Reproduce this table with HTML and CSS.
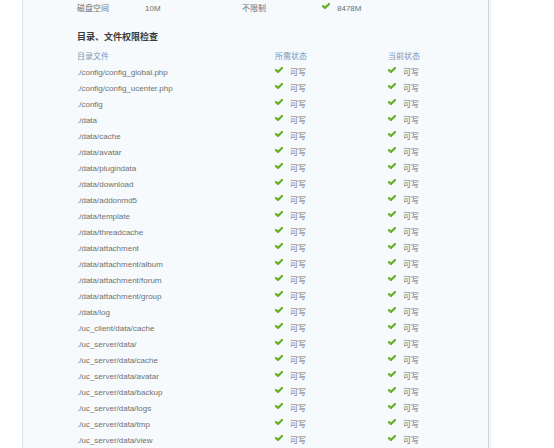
FILE: index.html
```html
<!DOCTYPE html>
<html lang="zh-CN">
<head>
  <meta charset="UTF-8" />
  <title>安装向导 - 检查安装环境</title>
  <link rel="stylesheet" href="styles.css">
</head>
<body>

  <div class="main">
    <table class="tb env">
      <tr>
        <td class="c1">磁盘空间</td>
        <td class="c2">10M</td>
        <td class="c3">不限制</td>
        <td class="c4"><span class="ok"><svg viewBox="0 0 8 6"><path d="M0.9 3.1 L3 4.9 L7.1 1" /></svg></span>8478M</td>
      </tr>
    </table>

    <h3 class="title">目录、文件权限检查</h3>

    <table class="tb dirs">
      <tr class="head">
        <th class="d1">目录文件</th>
        <th class="d2">所需状态</th>
        <th class="d3">当前状态</th>
      </tr>
      <tbody id="dirList"></tbody>
    </table>
  </div>

  <script>
    var dirs = [
      './config/config_global.php',
      './config/config_ucenter.php',
      './config',
      './data',
      './data/cache',
      './data/avatar',
      './data/plugindata',
      './data/download',
      './data/addonmd5',
      './data/template',
      './data/threadcache',
      './data/attachment',
      './data/attachment/album',
      './data/attachment/forum',
      './data/attachment/group',
      './data/log',
      './uc_client/data/cache',
      './uc_server/data/',
      './uc_server/data/cache',
      './uc_server/data/avatar',
      './uc_server/data/backup',
      './uc_server/data/logs',
      './uc_server/data/tmp',
      './uc_server/data/view'
    ];

    var check = '<span class="ok"><svg viewBox="0 0 8 6"><path d="M0.9 3.1 L3 4.9 L7.1 1" /></svg></span>可写';
    var html = '';
    dirs.forEach(function (d) {
      html += '<tr><td>' + d + '</td><td>' + check + '</td><td>' + check + '</td></tr>';
    });
    document.getElementById('dirList').innerHTML = html;
  </script>

</body>
</html>
```

FILE: styles.css
```css
body {
  margin: 0;
  background-color: #fff;
  font-family: "Liberation Sans", Arial, "Noto Sans CJK SC", sans-serif;
  font-size: 8px;
  color: #707070;
}

.main {
  margin-left: 22px;
  width: 467px;
  min-height: 448px;
  padding-top: 1px;
  padding-left: 54px;
  background-color: #f6fafd;
  border-left: 1px solid #dbe2e8;
  border-right: 1px solid #cfd6dc;
  box-shadow: 2px 0 0 #eef2f5;
  box-sizing: border-box;
}

.tb {
  border-collapse: collapse;
  width: 380px;
}

.tb td,
.tb th {
  height: 16px;
  padding: 0;
  line-height: 16px;
  text-align: left;
  vertical-align: middle;
  white-space: nowrap;
}

.env .c1 { width: 68px; }
.env .c2 { width: 97px; }
.env .c3 { width: 80px; }

.title {
  margin: 12px 0 4px;
  height: 16px;
  line-height: 16px;
  font-size: 9px;
  font-weight: bold;
  color: #3a3a3a;
}

.dirs .d1 { width: 198px; }
.dirs .d2 { width: 113px; }

.head th {
  font-weight: normal;
  color: #7898bb;
}

.ok {
  display: inline-block;
  width: 8px;
  height: 6px;
  margin-right: 7px;
  vertical-align: 2px;
}

.ok svg {
  display: block;
  width: 8px;
  height: 6px;
  fill: none;
  stroke: #6cb12c;
  stroke-width: 2.3;
  stroke-linecap: round;
  stroke-linejoin: round;
}
```
